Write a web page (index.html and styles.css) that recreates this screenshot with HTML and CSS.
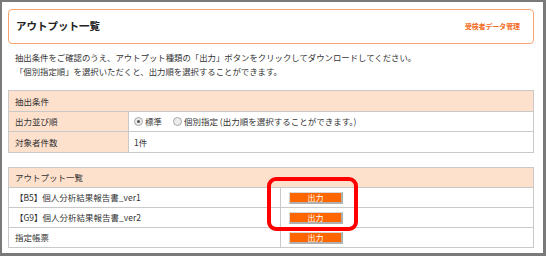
FILE: index.html
```html
<!DOCTYPE html>
<html lang="ja">
<head>
<meta charset="utf-8">
<link rel="stylesheet" href="styles.css">
</head>
<body>
<div class="frame">
  <div class="page-head">
    <h1 class="title">アウトプット一覧</h1>
    <a class="head-link">受検者データ管理</a>
  </div>
  <p class="desc">抽出条件をご確認のうえ、アウトプット種類の「出力」ボタンをクリックしてダウンロードしてください。<br>「個別指定順」を選択いただくと、出力順を選択することができます。</p>

  <table class="tbl cond">
    <tr><th class="hd" colspan="2">抽出条件</th></tr>
    <tr>
      <td class="lbl">出力並び順</td>
      <td class="val">
        <span class="radio checked"></span><span class="rtext">標準</span>
        <span class="radio second"></span><span class="rtext">個別指定 (出力順を選択することができます。)</span>
      </td>
    </tr>
    <tr>
      <td class="lbl">対象者件数</td>
      <td class="val">1件</td>
    </tr>
  </table>

  <div class="out-wrap">
    <table class="tbl out">
      <tr><th class="hd" colspan="2">アウトプット一覧</th></tr>
      <tr><td class="name">【B5】個人分析結果報告書_ver1</td><td class="act"><span class="btn">出力</span></td></tr>
      <tr><td class="name">【G9】個人分析結果報告書_ver2</td><td class="act"><span class="btn">出力</span></td></tr>
      <tr><td class="name">指定帳票</td><td class="act"><span class="btn">出力</span></td></tr>
    </table>
    <div class="highlight"></div>
  </div>
</div>
</body>
</html>
```

FILE: styles.css
```css
* { box-sizing: border-box; }
html, body { margin: 0; padding: 0; }
body {
  width: 546px;
  height: 256px;
  background: #7a7a7a;
  font-family: "Noto Sans CJK JP", "Noto Sans", sans-serif;
  color: #333;
  overflow: hidden;
}
.frame {
  margin: 2px 3px 0 2px;
  height: 251px;
  background: #fff;
  padding: 7px 9px 0 6px;
}
.page-head {
  height: 35px;
  border: 1px solid #f7a46e;
  border-radius: 4px;
  display: flex;
  align-items: center;
  justify-content: space-between;
  padding: 0 13px 0 7px;
}
.title {
  margin: 0;
  font-size: 10.5px;
  font-weight: bold;
  color: #222;
  line-height: 1;
}
.head-link {
  font-size: 6.9px;
  font-weight: bold;
  color: #f26a21;
  line-height: 1;
}
.desc {
  margin: 6px 0 0 7px;
  font-size: 8.4px;
  line-height: 14px;
  color: #333;
}
.tbl {
  width: 526px;
  border-collapse: collapse;
  font-size: 8.5px;
  color: #333;
}
.tbl th, .tbl td {
  border: 1px solid #c9c9c9;
  padding: 0 0 0 6px;
  text-align: left;
  font-weight: normal;
  vertical-align: middle;
}
.cond { margin-top: 12px; }
.cond th, .cond td { height: 20.5px; }
.hd { background: #fee1cd; }
.lbl { background: #fee1cd; width: 120px; }
.val { padding-left: 5px !important; }
.radio {
  display: inline-block;
  width: 9px;
  height: 9px;
  border: 1px solid #a8a8a8;
  border-radius: 50%;
  background: #ececec;
  vertical-align: -1px;
  position: relative;
}
.radio.checked::after {
  content: "";
  position: absolute;
  left: 2px;
  top: 2px;
  width: 3px;
  height: 3px;
  border-radius: 50%;
  background: #555;
}
.radio.second { margin-left: 9px; }
.rtext { margin-left: 2px; }
.out-wrap {
  position: relative;
  margin-top: 14px;
}
.out th, .out td { height: 20px; }
.name { width: 272px; }
.act { padding-left: 8px !important; }
.btn {
  display: inline-block;
  width: 54px;
  height: 12px;
  background: #ff6600;
  border-right: 2px solid #b0b0b0;
  border-bottom: 2px solid #b0b0b0;
  border-top: 1px solid #d8d8d8;
  border-left: 1px solid #d8d8d8;
  color: #fff;
  font-size: 8px;
  line-height: 9px;
  text-align: center;
  vertical-align: middle;
}
.highlight {
  position: absolute;
  left: 259px;
  top: 10px;
  width: 91px;
  height: 54px;
  border: 4px solid #ff0000;
  border-radius: 9px;
}
```
